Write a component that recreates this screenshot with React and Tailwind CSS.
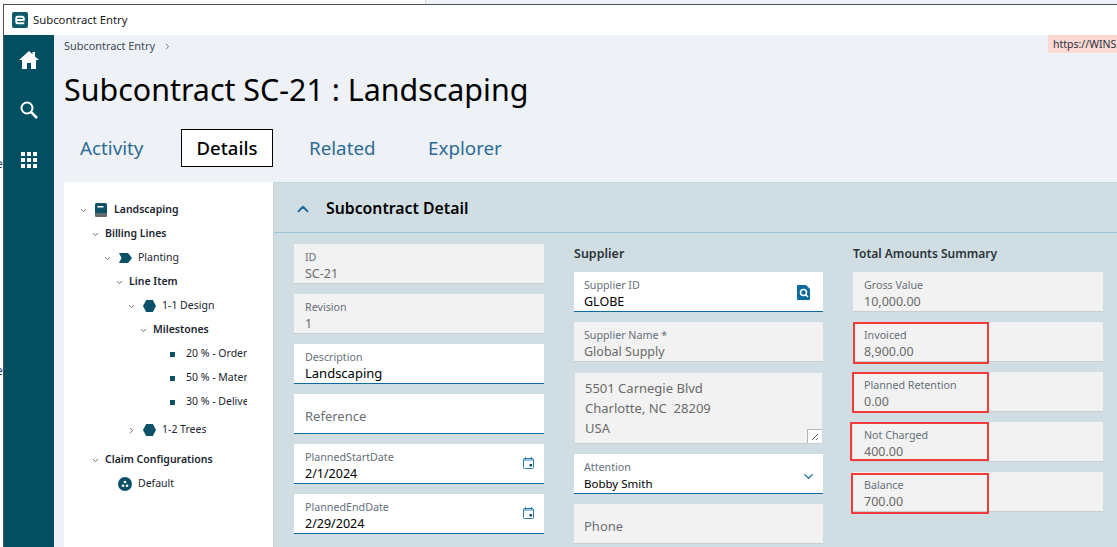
import { ChevronRight, ChevronDown, ChevronUp } from "lucide-react";

const font = "font-['Noto_Sans','Liberation_Sans',sans-serif]";

function Field({ label, value, muted, className = "", valueClass = "text-[12.5px]", children }) {
  return (
    <div className={`relative h-10 shrink-0 pt-[6px] ${muted ? "bg-[#f2f2f2] border-b border-[#c9cfd1]" : "bg-white border-b border-[#0a6aa5]"} ${className}`}>
      <div className="text-[10.7px] leading-[15px] text-[#66707a]">{label}</div>
      <div className={`leading-[17px] ${valueClass} ${muted ? "text-[#6a6a6a]" : "text-black"}`}>{value}</div>
      {children}
    </div>
  );
}

function Placeholder({ label, muted, className = "" }) {
  return (
    <div className={`flex h-10 shrink-0 items-center pt-[7px] text-[13px] text-[#6a7078] ${muted ? "bg-[#f2f2f2] border-b border-[#c9cfd1]" : "bg-white border-b border-[#0a6aa5]"} ${className}`}>
      {label}
    </div>
  );
}

function CalendarIcon() {
  return (
    <svg className="absolute right-[10px] top-[13px]" width="11" height="12" viewBox="0 0 11 12" fill="none">
      <rect x="0.5" y="1.5" width="10" height="10" rx="1" stroke="#2a7aa8" />
      <rect x="1" y="2" width="9" height="2" fill="#9cc3da" />
      <rect x="2" y="0" width="1" height="2.5" fill="#2a7aa8" />
      <rect x="8" y="0" width="1" height="2.5" fill="#2a7aa8" />
      <rect x="6.500" y="7" width="2.500" height="2.500" fill="#0e4f73" />
    </svg>
  );
}

function TreeRow({ indent, chevron, icon, bold, className = "", children }) {
  return (
    <div className={`flex h-6 items-center text-[10.5px] text-[#1c2530] ${className}`} style={{ paddingLeft: indent }}>
      <span className="flex w-[12px] shrink-0 items-center justify-center">
        {chevron === "down" && <ChevronDown size={9} strokeWidth={2} className="text-[#27465a]" />}
        {chevron === "right" && <ChevronRight size={9} strokeWidth={2} className="text-[#27465a]" />}
      </span>
      {icon && <span className="ml-[4px] mr-[1px] flex w-[16px] shrink-0 items-center justify-center">{icon}</span>}
      <span className={`ml-[4px] whitespace-nowrap ${bold ? "font-semibold" : ""}`}>{children}</span>
    </div>
  );
}

function Hexagon() {
  return (
    <svg width="13" height="12" viewBox="0 0 13 12">
      <polygon points="3.200,0 9.800,0 13,6 9.800,12 3.200,12 0,6" fill="#0c5168" />
    </svg>
  );
}

function RedBox({ left, top, bottom }) {
  return <div className="absolute right-[114px] border-2 border-[#f23c3c]" style={{ left, top, bottom }} />;
}

export default function App() {
  return (
    <div className={`relative h-[547px] w-[1117px] overflow-hidden bg-[#fbfbfb] ${font}`}>
      <span className="absolute left-[-4px] top-[156px] text-[12px] leading-[16px] text-[#1c3f73]">e</span>
      <span className="absolute left-[-4px] top-[363px] text-[12px] leading-[16px] text-[#1c3f73]">e</span>
      <div className="flex h-[4px]">
        <div className="w-[426px] border-r border-[#d8d8d8]" />
        <div className="flex-1 bg-[#eef2f6]" />
      </div>
      <div className="relative ml-[3px] flex h-[543px] flex-col border-l border-t border-[#4a5054]">
        <div className="flex h-[30px] shrink-0 items-center bg-white pl-[8px]">
          <svg width="16" height="16" viewBox="0 0 17 17">
            <rect width="17" height="17" rx="2" fill="#0d5b6d" />
            <path d="M4.500 8.500h8V6.500A1.500 1.500 0 0 0 11 5H6a1.500 1.500 0 0 0-1.500 1.500v4A1.500 1.500 0 0 0 6 12h7" fill="none" stroke="#fff" strokeWidth="2" />
          </svg>
          <span className="ml-[5px] text-[11.3px] text-[#222]">Subcontract Entry</span>
        </div>
        <div className="flex min-h-0 flex-1">
          <div className="flex w-[50px] shrink-0 flex-col items-center gap-8 bg-[#024f62] pt-[16px]">
            <svg width="20" height="18" viewBox="0 0 20 18" fill="#fff">
              <path d="M10 0 0 9h3v9h5v-6h4v6h5V9h3l-4-3.600V1h-2.500v2.200z" />
            </svg>
            <svg width="18" height="18" viewBox="0 0 18 18" fill="none" stroke="#fff">
              <circle cx="7" cy="7" r="5.500" strokeWidth="2" />
              <path d="m11 11 6 6" strokeWidth="2.500" />
            </svg>
            <svg width="16" height="16" viewBox="0 0 16 16" fill="#fff" className="mt-[1px]">
              <rect width="4" height="4" /><rect x="6" width="4" height="4" /><rect x="12" width="4" height="4" />
              <rect y="6" width="4" height="4" /><rect x="6" y="6" width="4" height="4" /><rect x="12" y="6" width="4" height="4" />
              <rect y="12" width="4" height="4" /><rect x="6" y="12" width="4" height="4" /><rect x="12" y="12" width="4" height="4" />
            </svg>
          </div>
          <div className="relative flex min-w-0 flex-1 flex-col bg-[#eef1f5] pl-[10px]">
            <div className="absolute right-0 top-0 flex h-[18px] w-[69px] items-center whitespace-nowrap bg-[#fdd9d3] pl-[5px] pt-[2px] text-[10.500px] text-[#25323c]">https://WINS</div>
            <div className="flex h-[20px] items-center pt-[3px] text-[10.900px] text-[#3c4a56]">
              Subcontract Entry
              <ChevronRight size={9} strokeWidth={2} className="ml-[8px]" />
            </div>
            <h1 className="mt-[13px] h-[44px] whitespace-nowrap text-[30.400px] leading-[44px] text-black">Subcontract SC-21 : Landscaping</h1>
            <div className="mt-[17px] flex h-[38px] items-center text-[18.800px] text-[#2c6c96]">
              <span className="ml-[16px] w-[101px]">Activity</span>
              <span className="flex h-[38px] w-[92px] items-center justify-center border border-black bg-white text-[18.500px] font-medium text-black">Details</span>
              <span className="ml-[36px] w-[119px]">Related</span>
              <span>Explorer</span>
            </div>
            <div className="mt-[15px] flex min-h-0 flex-1">
              <div className="w-[209px] shrink-0 overflow-hidden bg-white pt-[16px]">
                <TreeRow indent={13} chevron="down" bold icon={
                  <svg width="12" height="14" viewBox="0 0 12 14">
                    <rect width="12" height="11" rx="1.500" fill="#0c5168" />
                    <rect y="10" width="12" height="4" rx="1" fill="#5f6b70" />
                    <rect x="2.500" y="3" width="6" height="1.500" fill="#fff" />
                  </svg>
                }>Landscaping</TreeRow>
                <TreeRow indent={25} chevron="down" bold>Billing Lines</TreeRow>
                <TreeRow indent={37} chevron="down" icon={
                  <svg width="13" height="10" viewBox="0 0 13 10"><polygon points="0,0 9,0 13,5 9,10 0,10 2.500,5" fill="#0c5168" /></svg>
                }>Planting</TreeRow>
                <TreeRow indent={49} chevron="down" bold>Line Item</TreeRow>
                <TreeRow indent={61} chevron="down" icon={<Hexagon />}>1-1 Design</TreeRow>
                <TreeRow indent={73} chevron="down" bold>Milestones</TreeRow>
                {["20 % - Order", "50 % - Mater", "30 % - Delive"].map((t) => (
                  <div key={t} className="flex h-6 items-center pl-[106px] text-[10.500px] text-[#1c2530]">
                    <span className="h-[5px] w-[5px] shrink-0 bg-[#0c5168]" />
                    <span className="ml-[11px] w-[61px] overflow-hidden whitespace-nowrap">{t}</span>
                  </div>
                ))}
                <TreeRow indent={61} chevron="right" icon={<Hexagon />} className="mt-[4px]">1-2 Trees</TreeRow>
                <TreeRow indent={25} chevron="down" bold className="mt-[6px]">Claim Configurations</TreeRow>
                <TreeRow indent={37} icon={
                  <svg width="14" height="14" viewBox="0 0 14 14">
                    <circle cx="7" cy="7" r="7" fill="#0c5168" />
                    <circle cx="7" cy="5" r="1.300" fill="#fff" /><circle cx="5" cy="8.800" r="1.300" fill="#fff" /><circle cx="9" cy="8.800" r="1.300" fill="#fff" />
                  </svg>
                }>Default</TreeRow>
              </div>
              <div className="min-w-0 flex-1 border-l border-t border-[#c8d8de] bg-[#d0dee3]">
                <div className="flex h-[50px] items-center border-b border-[#97c5d3] pt-[2px]">
                  <ChevronUp size={18} strokeWidth={2.500} className="ml-[20px] text-[#1b6a9c]" />
                  <span className="ml-[14px] text-[15.800px] font-semibold text-black">Subcontract Detail</span>
                </div>
                <div className="flex pl-[20px] pt-[11px]">
                  <div className="flex w-[250px] shrink-0 flex-col gap-[10px]">
                    <Field muted className="pl-[11px]" label="ID" value="SC-21" />
                    <Field muted className="pl-[11px]" label="Revision" value="1" />
                    <Field className="pl-[11px]" label="Description" value="Landscaping" valueClass="text-[13px]" />
                    <Placeholder className="pl-[11px]" label="Reference" />
                    <Field className="pl-[11px]" label="PlannedStartDate" value="2/1/2024"><CalendarIcon /></Field>
                    <Field className="pl-[11px]" label="PlannedEndDate" value="2/29/2024"><CalendarIcon /></Field>
                  </div>
                  <div className="ml-[30px] flex w-[249px] shrink-0 flex-col">
                    <div className="flex h-[20px] items-center text-[12.500px] font-semibold text-[#2b3338]">Supplier</div>
                    <Field className="mt-[8px] pl-[10px]" label="Supplier ID" value="GLOBE">
                      <svg className="absolute right-[13px] top-[13px]" width="13" height="15" viewBox="0 0 13 15">
                        <path d="M1 0h8l4 4v10a1 1 0 0 1-1 1H1a1 1 0 0 1-1-1V1a1 1 0 0 1 1-1z" fill="#0d6a9c" />
                        <circle cx="6.500" cy="7.500" r="3" fill="none" stroke="#fff" strokeWidth="1.600" />
                        <path d="m8.500 9.500 2.500 2.500" stroke="#fff" strokeWidth="1.600" />
                      </svg>
                    </Field>
                    <Field muted className="mt-[10px] pl-[10px]" label="Supplier Name *" value="Global Supply" />
                    <div className="relative mx-[1px] mt-[11px] flex h-[71px] shrink-0 flex-col justify-center border-b border-[#c9cfd1] bg-[#f2f2f2] pl-[10px] text-[13px] leading-[20px] text-[#6a6a6a]">
                      <div>5501 Carnegie Blvd</div>
                      <div>Charlotte, NC&nbsp; 28209</div>
                      <div>USA</div>
                      <div className="absolute bottom-0 right-0 flex h-[14px] w-[15px] items-center justify-center border-l border-t border-[#b5b5b5] bg-white">
                        <svg width="8" height="8" viewBox="0 0 8 8" stroke="#666"><path d="M1 7 7 1M5 7l2-2" /></svg>
                      </div>
                    </div>
                    <Field className="mt-[10px] pl-[10px]" label="Attention" value="Bobby Smith" valueClass="text-[11.500px]">
                      <ChevronDown size={15} strokeWidth={2} className="absolute right-[7px] top-[15px] text-[#0a6aa5]" />
                    </Field>
                    <div className="mt-[10px]"><Placeholder muted className="pl-[10px]" label="Phone" /></div>
                  </div>
                  <div className="ml-[30px] flex w-[250px] shrink-0 flex-col">
                    <div className="flex h-[20px] items-center text-[12px] font-semibold text-[#2b3338]">Total Amounts Summary</div>
                    <Field muted className="mt-[8px] pl-[11px]" label="Gross Value" value="10,000.00" />
                    <Field muted className="mt-[10px] pl-[11px]" label="Invoiced" value="8,900.00">
                      <RedBox left="0px" top="0px" bottom="-3px" />
                    </Field>
                    <Field muted className="mt-[10px] pl-[11px]" label="Planned Retention" value="0.00">
                      <RedBox left="-1px" top="0px" bottom="-2px" />
                    </Field>
                    <Field muted className="mt-[10px] pl-[11px]" label="Not Charged" value="400.00">
                      <RedBox left="-3px" top="0px" bottom="0px" />
                    </Field>
                    <Field muted className="mt-[10px] pl-[11px]" label="Balance" value="700.00">
                      <RedBox left="-2px" top="1px" bottom="-3px" />
                    </Field>
                  </div>
                </div>
              </div>
            </div>
          </div>
        </div>
      </div>
    </div>
  );
}
